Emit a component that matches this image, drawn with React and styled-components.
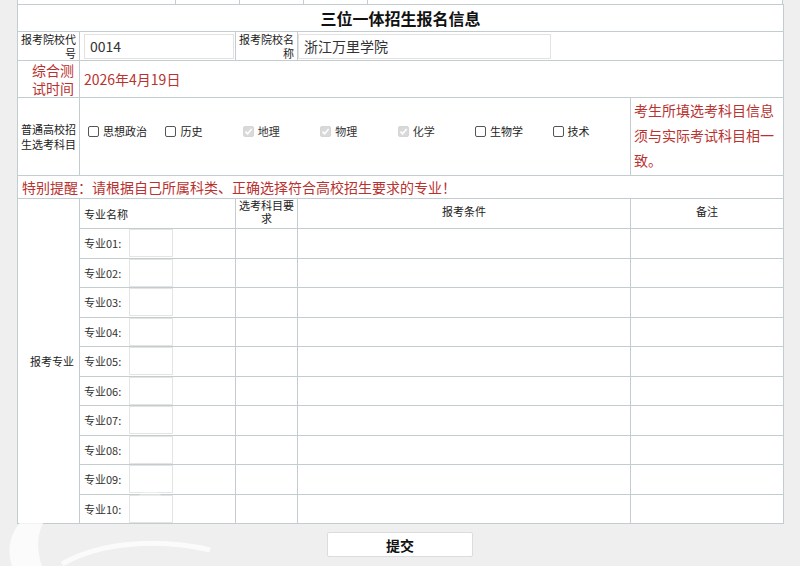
import styled, { createGlobalStyle } from 'styled-components';

const GlobalStyle = createGlobalStyle`
  html, body {
    margin: 0;
    padding: 0;
    background: #efefef;
  }
  body {
    font-family: "Noto Sans CJK SC", "Noto Sans", sans-serif;
    color: #222;
  }
`;

const LINE = '#c3cdd0';
const RED = '#b83230';

const Page = styled.div`
  position: relative;
  width: 800px;
  height: 566px;
  overflow: hidden;
  background: #efefef;
`;

const Sheet = styled.div`
  margin-left: 17px;
  width: 766px;
  background: #fff;
`;

const CutRow = styled.div`
  display: flex;
  height: 4px;
  border-left: 1px solid ${LINE};
  border-right: 1px solid ${LINE};
  box-sizing: border-box;
`;

const CutCell = styled.div`
  width: ${p => p.w}px;
  border-right: ${p => (p.last ? 'none' : `1px solid ${LINE}`)};
  flex: ${p => (p.last ? 1 : 'none')};
`;

const Table = styled.table`
  width: 766px;
  border-collapse: collapse;
  table-layout: fixed;
  background: #fff;
`;

const Row = styled.tr`
  height: ${p => p.h}px;
`;

const Cell = styled.td`
  border: 1px solid ${LINE};
  padding: 0 ${p => (p.pad ?? 4)}px;
  font-size: ${p => p.size || 11}px;
  line-height: ${p => p.lh || 14}px;
  color: ${p => (p.red ? RED : '#222')};
  text-align: ${p => p.align || 'left'};
  vertical-align: ${p => p.valign || 'middle'};
  font-weight: ${p => (p.bold ? 700 : 400)};
  overflow: hidden;
`;

const Title = styled(Cell)`
  font-size: 16px;
  font-weight: 700;
  text-align: center;
  color: #111;
`;

const Field = styled.div`
  width: ${p => p.w}px;
  height: 25px;
  box-sizing: border-box;
  border: 1px solid #e2e2e2;
  background: #fff;
  font-size: 14px;
  line-height: 23px;
  padding-left: 5px;
  color: #333;
`;

const Subjects = styled.div`
  display: flex;
  align-items: center;
  padding-left: 8px;
  margin-top: -11px;
`;

const Subject = styled.label`
  display: flex;
  align-items: center;
  width: 77.7px;
  font-size: 11px;
  color: ${p => (p.disabled ? '#333' : '#222')};
`;

const Box = styled.span`
  width: 11px;
  height: 11px;
  box-sizing: border-box;
  margin-right: 4px;
  border-radius: 2px;
  border: 1px solid ${p => (p.checked ? '#d6d6d6' : '#555')};
  background: ${p => (p.checked ? '#d9d9d9' : '#fff')};
  display: flex;
  align-items: center;
  justify-content: center;
`;

const Major = styled.div`
  display: flex;
  height: 28px;
  align-items: stretch;
`;

const MajorLabel = styled.span`
  width: 45px;
  font-size: 11px;
  line-height: 28px;
  color: #333;
`;

const MajorInput = styled.span`
  width: 44px;
  box-sizing: border-box;
  border: 1px solid #e4e4e4;
  background: #fff;
`;

const Footer = styled.div`
  display: flex;
  justify-content: center;
  padding-top: 8px;
`;

const Submit = styled.button`
  width: 146px;
  height: 25px;
  border: 1px solid #dcdcdc;
  border-radius: 2px;
  background: #fff;
  font-family: inherit;
  font-size: 14px;
  font-weight: 700;
  color: #111;
  padding: 0;
`;

const Watermark = styled.svg`
  position: absolute;
  left: 0;
  bottom: 0;
  pointer-events: none;
`;

const subjects = [
  { name: '思想政治' },
  { name: '历史' },
  { name: '地理', checked: true },
  { name: '物理', checked: true },
  { name: '化学', checked: true },
  { name: '生物学' },
  { name: '技术' },
];

const majors = ['01', '02', '03', '04', '05', '06', '07', '08', '09', '10'];

const Check = () => (
  <svg width="9" height="9" viewBox="0 0 9 9">
    <path d="M1.5 4.6 L3.6 6.7 L7.6 2" fill="none" stroke="#fff" strokeWidth="1.6" />
  </svg>
);

export default function App() {
  return (
    <Page>
      <GlobalStyle />
      <Sheet>
        <CutRow>
          <CutCell w={157} />
          <CutCell w={63} />
          <CutCell w={63} />
          <CutCell w={63} />
          <CutCell last />
        </CutRow>
        <Table>
          <colgroup>
            <col style={{ width: 62 }} />
            <col style={{ width: 156 }} />
            <col style={{ width: 62 }} />
            <col style={{ width: 333 }} />
            <col style={{ width: 153 }} />
          </colgroup>
          <tbody>
            <Row h={27}>
              <Title colSpan={5}>三位一体招生报名信息</Title>
            </Row>
            <Row h={29}>
              <Cell align="right" pad={3}>报考院校代号</Cell>
              <Cell pad={4}>
                <Field w={150}>0014</Field>
              </Cell>
              <Cell align="right" pad={3}>报考院校名称</Cell>
              <Cell colSpan={2} pad={0}>
                <Field w={253}>浙江万里学院</Field>
              </Cell>
            </Row>
            <Row h={37}>
              <Cell align="right" red size={14} lh={18} pad={5}>综合测试时间</Cell>
              <Cell colSpan={4} red size={14}>2026年4月19日</Cell>
            </Row>
            <Row h={78}>
              <Cell pad={3} lh={15}>普通高校招生选考科目</Cell>
              <Cell colSpan={3} pad={0}>
                <Subjects>
                  {subjects.map(s => (
                    <Subject key={s.name} disabled={s.checked}>
                      <Box checked={s.checked}>{s.checked && <Check />}</Box>
                      {s.name}
                    </Subject>
                  ))}
                </Subjects>
              </Cell>
              <Cell red size={14} lh={25} valign="top" pad={3}>
                考生所填选考科目信息须与实际考试科目相一致。
              </Cell>
            </Row>
            <Row h={23}>
              <Cell colSpan={5} red size={14}>
                特别提醒：请根据自己所属科类、正确选择符合高校招生要求的专业！
              </Cell>
            </Row>
            <Row h={30}>
              <Cell rowSpan={11} align="right" pad={5}>报考专业</Cell>
              <Cell>专业名称</Cell>
              <Cell align="center" pad={2} lh={13} valign="top">选考科目要求</Cell>
              <Cell align="center" valign="top" lh={24}>报考条件</Cell>
              <Cell align="center" valign="top" lh={24}>备注</Cell>
            </Row>
            {majors.map(m => (
              <Row h={29.5} key={m}>
                <Cell pad={4}>
                  <Major>
                    <MajorLabel>专业{m}:</MajorLabel>
                    <MajorInput />
                  </Major>
                </Cell>
                <Cell />
                <Cell />
                <Cell />
              </Row>
            ))}
          </tbody>
        </Table>
      </Sheet>
      <Footer>
        <Submit>提交</Submit>
      </Footer>
      <Watermark width="220" height="120" viewBox="0 0 220 120">
        <path d="M12 120 C 2 90, 22 62, 62 56 C 42 70, 32 92, 42 120 Z" fill="#fff" opacity="0.75" />
        <path d="M62 118 C 100 96, 160 92, 210 104" fill="none" stroke="#fff" strokeWidth="5" opacity="0.75" />
        <circle cx="150" cy="58" r="14" fill="#fff" opacity="0.35" />
      </Watermark>
    </Page>
  );
}
